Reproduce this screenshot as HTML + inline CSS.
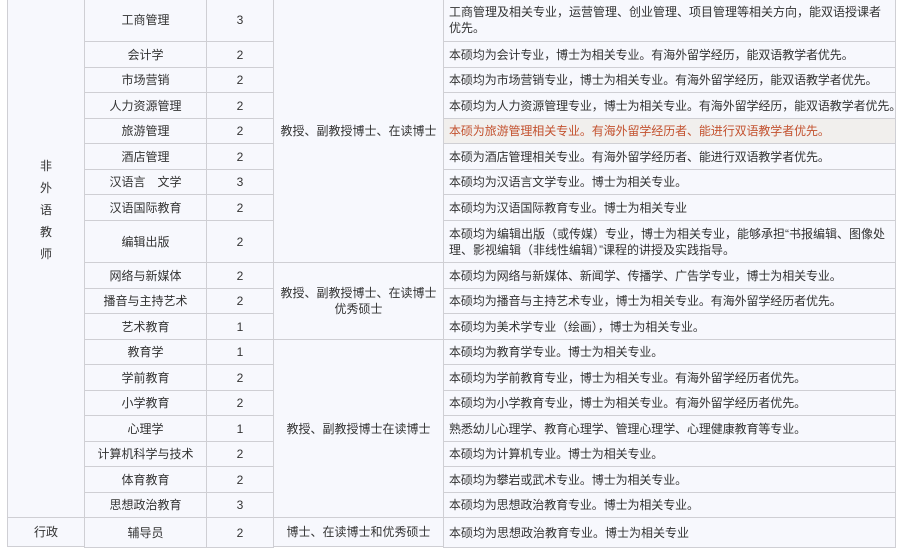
<!DOCTYPE html>
<html><head><meta charset="utf-8"><style>
body{margin:0;width:900px;height:542px;overflow:hidden;background:#fff;font-family:"Liberation Sans","Noto Sans CJK SC",sans-serif;font-size:12px;color:#333}
.c{position:absolute;box-sizing:border-box;border:1px solid #cfcfd4;background:#f7f8fd;display:flex;align-items:center;justify-content:center;text-align:center;line-height:16px}
.d{justify-content:flex-start;text-align:left;padding:0 6px 0 5px}
.n{white-space:nowrap;letter-spacing:-0.1px}
.h{background:#f1efed;color:#c3522f}
</style></head><body>
<div class="c" style="left:7px;top:-2px;width:78px;height:520px"><div style="line-height:22px;transform:translateY(-48px)">非<br>外<br>语<br>教<br>师</div></div>
<div class="c" style="left:7px;top:517px;width:78px;height:30px">行政</div>
<div class="c" style="left:273px;top:-2px;width:171px;height:265px">教授、副教授博士、在读博士</div>
<div class="c" style="left:273px;top:262px;width:171px;height:78px">教授、副教授博士、在读博士<br>优秀硕士</div>
<div class="c" style="left:273px;top:339px;width:171px;height:179px">教授、副教授博士在读博士</div>
<div class="c" style="left:273px;top:517px;width:171px;height:30px">博士、在读博士和优秀硕士</div>
<div id="rows"></div>
<script>
var R=[
[-2,41,"工商管理","3","工商管理及相关专业，运营管理、创业管理、项目管理等相关方向，能双语授课者优先。"],
[41,67,"会计学","2","本硕均为会计专业，博士为相关专业。有海外留学经历，能双语教学者优先。"],
[67,92,"市场营销","2","本硕均为市场营销专业，博士为相关专业。有海外留学经历，能双语教学者优先。"],
[92,118,"人力资源管理","2","本硕均为人力资源管理专业，博士为相关专业。有海外留学经历，能双语教学者优先。"],
[118,143,"旅游管理","2","本硕为旅游管理相关专业。有海外留学经历者、能进行双语教学者优先。",1],
[143,169,"酒店管理","2","本硕为酒店管理相关专业。有海外留学经历者、能进行双语教学者优先。"],
[169,194,"汉语言　文学","3","本硕均为汉语言文学专业。博士为相关专业。"],
[194,220,"汉语国际教育","2","本硕均为汉语国际教育专业。博士为相关专业"],
[220,262,"编辑出版","2","本硕均为编辑出版（或传媒）专业，博士为相关专业，能够承担“书报编辑、图像处理、影视编辑（非线性编辑）”课程的讲授及实践指导。"],
[262,288,"网络与新媒体","2","本硕均为网络与新媒体、新闻学、传播学、广告学专业，博士为相关专业。"],
[288,313,"播音与主持艺术","2","本硕均为播音与主持艺术专业，博士为相关专业。有海外留学经历者优先。"],
[313,339,"艺术教育","1","本硕均为美术学专业（绘画），博士为相关专业。"],
[339,364,"教育学","1","本硕均为教育学专业。博士为相关专业。"],
[364,390,"学前教育","2","本硕均为学前教育专业，博士为相关专业。有海外留学经历者优先。"],
[390,415,"小学教育","2","本硕均为小学教育专业，博士为相关专业。有海外留学经历者优先。"],
[415,441,"心理学","1","熟悉幼儿心理学、教育心理学、管理心理学、心理健康教育等专业。"],
[441,466,"计算机科学与技术","2","本硕均为计算机专业。博士为相关专业。"],
[466,492,"体育教育","2","本硕均为攀岩或武术专业。博士为相关专业。"],
[492,517,"思想政治教育","3","本硕均为思想政治教育专业。博士为相关专业。"],
[517,547,"辅导员","2","本硕均为思想政治教育专业。博士为相关专业"]];
var h="";
R.forEach(function(r){var t=r[0],H=r[1]-r[0]+1,two=(H>30);
h+='<div class="c" style="left:84px;top:'+t+'px;width:123px;height:'+H+'px">'+r[2]+'</div>';
h+='<div class="c" style="left:206px;top:'+t+'px;width:68px;height:'+H+'px">'+r[3]+'</div>';
h+='<div class="c d'+(two?'':' n')+(r[5]?' h':'')+'" style="left:443px;top:'+t+'px;width:453px;height:'+H+'px">'+r[4]+'</div>';});
document.getElementById("rows").innerHTML=h;
</script>
</body></html>
